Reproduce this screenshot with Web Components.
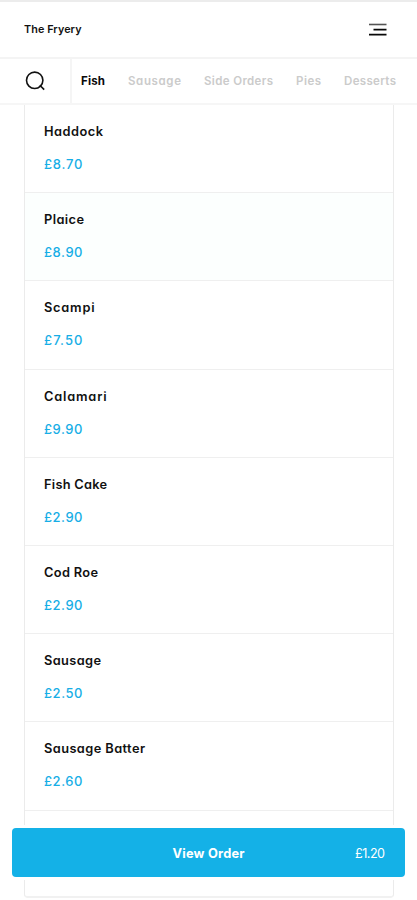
<!DOCTYPE html>
<html lang="en">
<head>
<meta charset="utf-8">
<title>The Fryery</title>
<style>
html, body { margin: 0; height: 900px; overflow: hidden; background: #fff; }
body { font-family: Inter, "Open Sans", sans-serif; font-feature-settings: "cv11"; color: #111; }
</style>
</head>
<body>
<fryery-app></fryery-app>
<script>
const define = (name, html, setup) => customElements.define(name, class extends HTMLElement {
  connectedCallback() {
    if (!this.shadowRoot) this.attachShadow({ mode: 'open' }).innerHTML = html;
    if (setup) setup(this);
  }
});

// A single-line label whose tracking is adjusted to fill its "width" attribute.
define('track-label', `<style>
  :host { display: block; white-space: nowrap; line-height: 20px; }
  span { display: inline-block; }
</style><span></span>`, el => {
  const text = el.getAttribute('text');
  if (!text) return;
  const span = el.shadowRoot.querySelector('span');
  span.textContent = text;
  span.style.letterSpacing = '0px';
  const target = +el.getAttribute('width');
  el.style.width = target + 'px';
  const natural = span.getBoundingClientRect().width;
  span.style.letterSpacing = (target - natural) / (text.length - 1) + 'px';
});

define('app-header', `<style>
  :host { display: flex; box-sizing: border-box; height: 59px; padding: 0 30px 0 24px; align-items: center;
    justify-content: space-between; border-top: 2px solid #ececec; border-bottom: 2px solid #f4f4f4; }
  track-label { font-size: 10.8px; font-weight: 600; }
  svg { display: block; }
</style>
<track-label text="The Fryery" width="57.5"></track-label>
<svg width="18" height="14" viewBox="0 0 18 14" aria-label="Menu"><path d="M0 1.5H17.5" stroke="#555" stroke-width="1.6"/><path d="M4.5 6.6H17.5M0 11.7H17.5" stroke="#080808" stroke-width="1.8"/></svg>`);

define('category-bar', `<style>
  :host { display: flex; box-sizing: border-box; height: 46px; border-bottom: 2px solid #f6f6f6; }
  .search { box-sizing: border-box; width: 72px; padding: 12px 0 0 25px; border-right: 2px solid #f5f5f5; }
  svg { display: block; }
  nav { display: flex; align-items: center; gap: 23px; padding-left: 9px; font-size: 11.5px; font-weight: 600; color: #cbcbcb; }
  track-label:first-child { color: #0a0a0a; font-weight: 700; }
</style>
<div class="search"><svg width="21" height="21" viewBox="0 0 21 21" fill="none" stroke="#111" stroke-width="1.6"><circle cx="9.7" cy="9.3" r="8.2"/><path d="M14.8 14.2L19.2 18.6"/></svg></div>
<nav>
<track-label text="Fish" width="24"></track-label>
<track-label text="Sausage" width="53"></track-label>
<track-label text="Side Orders" width="69"></track-label>
<track-label text="Pies" width="25"></track-label>
<track-label text="Desserts" width="52"></track-label>
</nav>`);

define('menu-item', `<style>
  :host { display: block; box-sizing: border-box; height: 88.2px; padding: 17px 0 0 19px; border-bottom: 1.5px solid #efefef; }
  :host([active]) { background: #fcfffe; }
  .name { font-size: 12.8px; font-weight: 600; }
  .price { margin-top: 12px; font-size: 13px; font-weight: 500; color: #17aee6; }
</style><track-label class="name"></track-label><track-label class="price" width="38.5"></track-label>`, el => {
  for (const [cls, attr] of [['.name', 'name'], ['.price', 'price']]) {
    const label = el.shadowRoot.querySelector(cls);
    label.setAttribute('text', el.getAttribute(attr));
    if (attr === 'name') label.setAttribute('width', el.getAttribute('width'));
    label.connectedCallback();
  }
});

define('menu-card', `<style>
  :host { display: block; box-sizing: border-box; height: 793px; width: 370px; margin-left: 24px;
    border: 1px solid #ebebeb; border-top: 0; border-bottom-width: 2px; border-bottom-color: #f1f1f1; border-radius: 0 0 4px 4px; }
</style><slot></slot>`);

define('order-bar', `<style>
  :host { position: absolute; left: 12px; right: 12px; top: 828px; height: 49px; display: grid;
    grid-template-columns: 1fr 72px 1fr; align-items: center; box-sizing: border-box; padding: 2px 20px 0;
    border-radius: 4px; background: #14b1e7; color: #fff; box-shadow: 0 0 0 3px #fff; }
  .title { grid-column: 2; font-size: 12.8px; font-weight: 700; }
  .total { justify-self: end; font-size: 12.6px; font-weight: 400; }
</style><track-label class="title" text="View Order" width="72"></track-label><track-label class="total" text="£1.20" width="30"></track-label>`);

define('fryery-app', `<style>
  :host { display: block; position: relative; width: 417px; height: 900px; overflow: hidden; }
</style>
<app-header></app-header>
<category-bar></category-bar>
<menu-card>
<menu-item name="Haddock" price="£8.70" width="59"></menu-item>
<menu-item name="Plaice" price="£8.90" width="40" active></menu-item>
<menu-item name="Scampi" price="£7.50" width="50.5"></menu-item>
<menu-item name="Calamari" price="£9.90" width="62.5"></menu-item>
<menu-item name="Fish Cake" price="£2.90" width="63"></menu-item>
<menu-item name="Cod Roe" price="£2.90" width="54"></menu-item>
<menu-item name="Sausage" price="£2.50" width="57"></menu-item>
<menu-item name="Sausage Batter" price="£2.60" width="101"></menu-item>
</menu-card>
<order-bar></order-bar>`);
</script>
</body>
</html>
